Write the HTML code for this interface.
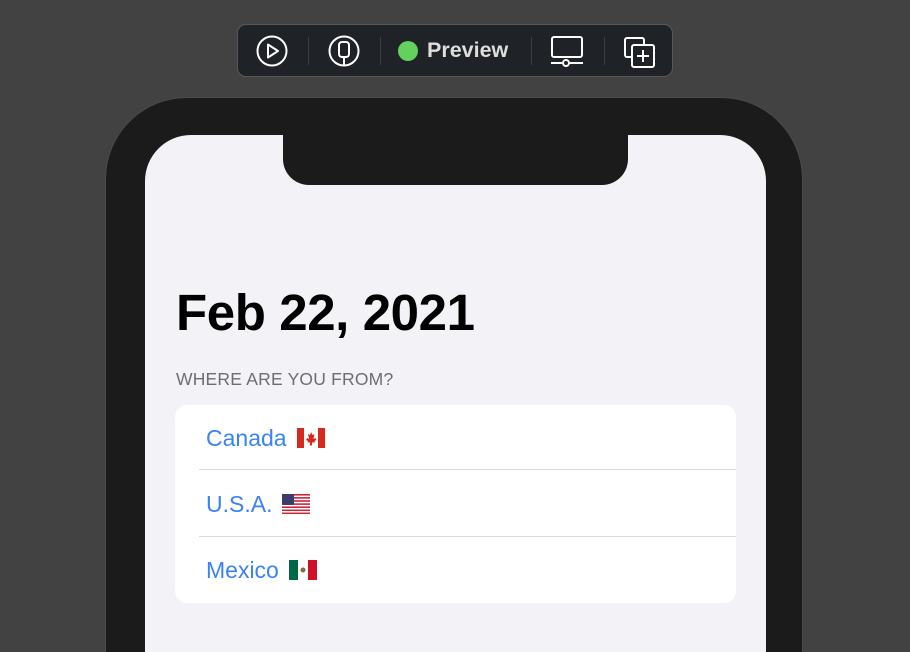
<!DOCTYPE html><html style="height:652px;overflow:hidden"><head><style>
body{margin:0;width:910px;height:652px;background:#424242;position:relative;overflow:hidden;font-family:"Liberation Sans",sans-serif}
.tb{position:absolute;left:237px;top:24px;width:434px;height:51px;background:#1f2226;border:1px solid #56585c;border-radius:9px}
.sep{position:absolute;top:12px;width:1px;height:28px;background:#3a3d42}
.frame{position:absolute;left:105px;top:97px;width:698px;height:555px;background:#1b1b1b;border:1px solid #4a4a4a;border-bottom:0;border-radius:82px 82px 0 0;box-sizing:border-box}
.screen{position:absolute;left:145px;top:135px;width:621px;height:517px;background:#f2f2f7;border-radius:46px 46px 0 0;overflow:hidden}
.notch{position:absolute;left:138px;top:-2px;width:345px;height:52px;background:#1b1b1b;border-radius:0 0 26px 26px}
h1{position:absolute;left:31px;top:148px;margin:0;font-size:51px;font-weight:bold;letter-spacing:-0.4px;color:#000}
.hd{position:absolute;left:31px;top:234px;font-size:17.5px;color:#6d6d72;letter-spacing:.2px}
.card{position:absolute;left:30px;top:270px;width:561px;height:198px;background:#fff;border-radius:12px}
.row{position:absolute;left:31px;height:66px;line-height:66px;font-size:23px;color:#3a82f7;display:flex;align-items:center;gap:10px}
.line{position:absolute;left:24px;right:0;height:1px;background:#dcdce0}
</style></head><body>
<div class="tb">
<svg style="position:absolute;left:18px;top:10px" width="32" height="32" viewBox="0 0 32 32" fill="none" stroke="#fff" stroke-width="2"><circle cx="16" cy="16" r="14.5"/><path d="M12 9.5v13l10-6.5z" stroke-linejoin="round"/></svg>
<div class="sep" style="left:70px"></div>
<svg style="position:absolute;left:90px;top:10px" width="32" height="32" viewBox="0 0 32 32" fill="none" stroke="#fff" stroke-width="2"><circle cx="16" cy="16" r="14.5"/><rect x="11" y="7" width="10" height="15" rx="3"/><path d="M16 22v8"/></svg>
<div class="sep" style="left:142px"></div>
<div style="position:absolute;left:160px;top:16px;width:20px;height:20px;border-radius:50%;background:#63d15e"></div>
<div style="position:absolute;left:189px;top:13px;font-size:21.5px;color:#dedede;font-weight:bold">Preview</div>
<div class="sep" style="left:293px"></div>
<svg style="position:absolute;left:312px;top:10px" width="34" height="32" viewBox="0 0 34 32" fill="none" stroke="#fff" stroke-width="2"><rect x="2" y="2" width="30" height="20" rx="2"/><path d="M1 28h11M20 28h13"/><circle cx="16" cy="28" r="3"/></svg>
<div class="sep" style="left:366px"></div>
<svg style="position:absolute;left:385px;top:11px" width="34" height="32" viewBox="0 0 34 32" fill="none" stroke="#fff" stroke-width="2"><path d="M9 21H4a2 2 0 0 1-2-2V4a2 2 0 0 1 2-2h15a2 2 0 0 1 2 2v5"/><rect x="9" y="9" width="22" height="22" rx="2"/><path d="M20 14v12M14 20h12"/></svg>
</div>
<div class="frame"></div>
<div class="screen">
<div class="notch"></div>
<h1>Feb 22, 2021</h1>
<div class="hd">WHERE ARE YOU FROM?</div>
<div class="card">
<div class="row" style="top:0">Canada <svg width="28" height="20" viewBox="0 0 28 20"><rect width="28" height="20" fill="#fff"/><rect width="7" height="20" fill="#d52b1e"/><rect x="21" width="7" height="20" fill="#d52b1e"/><path d="M14 4l1.5 3 2-1-1 5 2-1 1 2-2 1 .5 1.5H15v3h-2v-3H10.5l.5-1.5-2-1 1-2 2 1-1-5 2 1z" fill="#d52b1e"/></svg></div>
<div class="line" style="top:64px"></div>
<div class="row" style="top:66px">U.S.A. <svg width="28" height="20" viewBox="0 0 28 20"><rect width="28" height="20" fill="#fff"/><g fill="#c8283c"><rect y="0" width="28" height="1.6"/><rect y="3.1" width="28" height="1.6"/><rect y="6.2" width="28" height="1.6"/><rect y="9.3" width="28" height="1.6"/><rect y="12.4" width="28" height="1.6"/><rect y="15.5" width="28" height="1.6"/><rect y="18.5" width="28" height="1.5"/></g><rect width="12" height="10.9" fill="#3c3b6e"/></svg></div>
<div class="line" style="top:131px"></div>
<div class="row" style="top:132px">Mexico <svg width="28" height="20" viewBox="0 0 28 20"><rect width="28" height="20" fill="#fff"/><rect width="9" height="20" fill="#006847"/><rect x="19" width="9" height="20" fill="#ce1126"/><circle cx="14" cy="10" r="2.5" fill="#8a6b3a"/></svg></div>
</div>
</div>
</body></html>
